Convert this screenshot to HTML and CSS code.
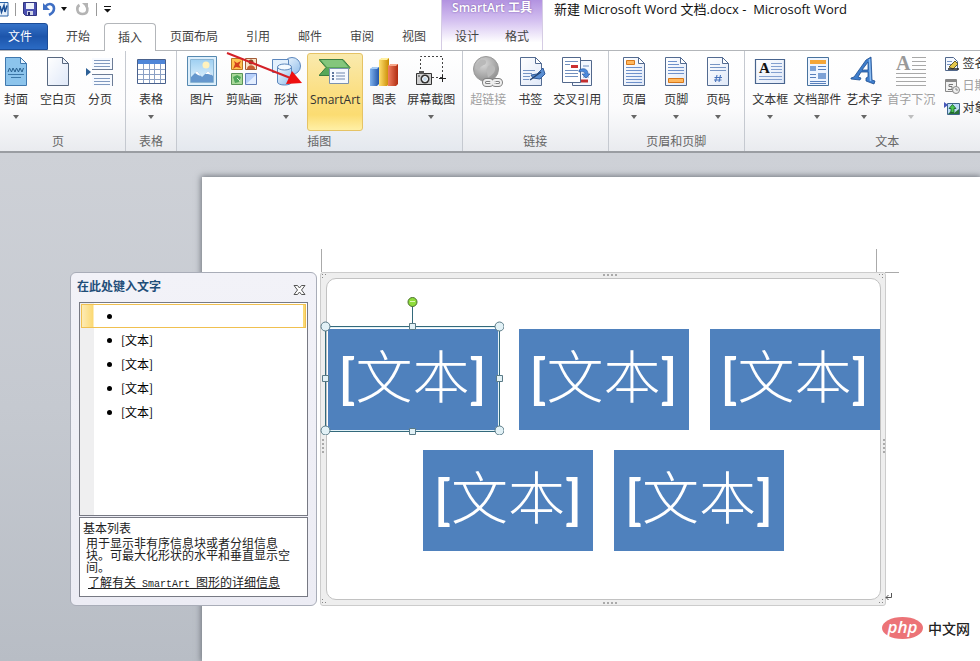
FILE: index.html
```html
<!DOCTYPE html>
<html lang="zh-CN">
<head>
<meta charset="utf-8">
<title>新建 Microsoft Word 文档.docx - Microsoft Word</title>
<link rel="stylesheet" href="styles.css">
</head>
<body>
<svg class="defs" width="0" height="0" aria-hidden="true">
  <defs>
    <linearGradient id="paper" x1="0" y1="0" x2="1" y2="1"><stop offset="0" stop-color="#fff"/><stop offset="1" stop-color="#dfe8f8"/></linearGradient>
    <linearGradient id="sky" x1="0" y1="0" x2="0" y2="1"><stop offset="0" stop-color="#9fd0f2"/><stop offset="1" stop-color="#e6f5fd"/></linearGradient>
    <linearGradient id="blue" x1="0" y1="0" x2="1" y2="0"><stop offset="0" stop-color="#7fb2ee"/><stop offset="1" stop-color="#2456a8"/></linearGradient>
    <linearGradient id="gold" x1="0" y1="0" x2="1" y2="0"><stop offset="0" stop-color="#ffe070"/><stop offset="1" stop-color="#c98a00"/></linearGradient>
    <linearGradient id="red" x1="0" y1="0" x2="1" y2="0"><stop offset="0" stop-color="#f08060"/><stop offset="1" stop-color="#b02c10"/></linearGradient>
    <linearGradient id="glass" x1="0" y1="0" x2="1" y2="1"><stop offset="0" stop-color="#f2f9ff"/><stop offset="1" stop-color="#8fbcea"/></linearGradient>
    <radialGradient id="globe" cx=".4" cy=".3" r=".8"><stop offset="0" stop-color="#d8d8d8"/><stop offset="1" stop-color="#888"/></radialGradient>
  </defs>
</svg>

<header class="titlebar">
  <div class="main-col">
    <div class="quick">
      <svg width="9" height="16" viewBox="0 0 9 16"><path d="M0 1.500H8V15H0" fill="#e6f0fb" stroke="#2a62a8"/><path d="M0 5l1.500 6L4 4.500 5 11 7 4.500" fill="none" stroke="#1b4f96" stroke-width="1.600"/></svg>
      <span class="bar"></span>
      <button class="qbtn" aria-label="保存"><svg width="16" height="16" viewBox="0 0 16 16"><path d="M1.500 1.500h13v13h-11l-2-2z" fill="#4a50b0" stroke="#303480"/><path d="M4 2h8v6H4z" fill="#eef2fb"/><path d="M5 10h6v4H5z" fill="#cfd4e6"/><path d="M6 11h2v3H6z" fill="#23286c"/></svg></button>
      <button class="qbtn" aria-label="撤消"><svg width="15" height="16" viewBox="0 0 15 16"><path d="M3 6C7 1 12 3 12 7.500c0 3-2 5-5 6.500" fill="none" stroke="#3f6fc4" stroke-width="2.600"/><path d="M1 2v7h7z" fill="#3f6fc4"/></svg></button>
      <span class="caret dark"></span>
      <button class="qbtn redo" aria-label="恢复"><svg width="15" height="16" viewBox="0 0 15 16"><path d="M4.500 4C1 6 1.500 13 7.500 13S13 7 11 4.500" fill="none" stroke="#b4b4b4" stroke-width="2.600"/><path d="M7 2h6v6z" fill="#b4b4b4"/></svg></button>
      <span class="bar"></span>
      <button class="qbtn" aria-label="自定义快速访问工具栏"><svg width="9" height="8" viewBox="0 0 9 8"><path d="M1 1h7v1H1zM1 4h7L4.500 7.500z" fill="#111"/></svg></button>
    </div>
    <nav class="tabs">
      <button class="tab file">文件</button>
      <button class="tab">开始</button>
      <button class="tab active">插入</button>
      <button class="tab">页面布局</button>
      <button class="tab">引用</button>
      <button class="tab">邮件</button>
      <button class="tab">审阅</button>
      <button class="tab">视图</button>
    </nav>
  </div>
  <div class="context">
    <div class="context-title">SmartArt 工具</div>
    <div class="tabs"><button class="tab">设计</button><button class="tab">格式</button></div>
  </div>
  <h1 class="title">新建 Microsoft Word 文档.docx&nbsp;-&nbsp; Microsoft Word</h1>
</header>

<section class="ribbon">
  <div class="group">
    <div class="tools">
      <button class="tool"><svg viewBox="0 0 32 32"><path d="M5.500 1.500h15l6 6v22h-21z" fill="#8cc4ec" stroke="#3f78ae"/><path d="M20.500 1.500v6h6z" fill="#e8f5ff" stroke="#3f78ae"/><path d="M8 16l1.500-4 2 4 1.500-4 2 4 1.500-4 2 4 1.500-4 2 4 1.500-4" fill="none" stroke="#28608f"/><path d="M8 18.500h16M11 21.500h10" stroke="#3d78a8"/></svg><span>封面</span><i class="caret"></i></button>
      <button class="tool"><svg viewBox="0 0 32 32"><path d="M5.500 1.500h15l6 6v22h-21z" fill="url(#paper)" stroke="#586880"/><path d="M20.500 1.500v6h6z" fill="#eef3fb" stroke="#586880"/></svg><span>空白页</span></button>
      <button class="tool"><svg viewBox="0 0 32 32"><path d="M8 2v12h20.500V2M8 30V19h20.500v11" fill="#f7faff"/><path d="M28.500 2v12M28.500 19v11M8 13.500h21M8 18.500h21" stroke="#6c7c96"/><path d="M10 4.500h16M10 7.500h16M10 10.500h16M10 22.500h16M10 25.500h16M10 28.500h16" stroke="#8099bf"/><path d="M2 12l5 4-5 4z" fill="#2d6096"/></svg><span>分页</span></button>
    </div>
    <div class="caption">页</div>
  </div>
  <div class="group">
    <div class="tools">
      <button class="tool"><svg viewBox="0 0 32 32"><path d="M2.500 3.500h28v24h-28z" fill="#fff" stroke="#48608c"/><path d="M3 4h27v4H3z" fill="#4f86d8"/><path d="M3 13.500h27M3 18.500h27M3 23.500h27M8.500 8v19M14.500 8v19M19.500 8v19M25.500 8v19" stroke="#8ba0c4"/></svg><span>表格</span><i class="caret"></i></button>
    </div>
    <div class="caption">表格</div>
  </div>
  <div class="group shaded">
    <div class="tools">
      <button class="tool"><svg viewBox="0 0 32 32"><path d="M1.500 .5h29v29h-29z" fill="#dceefb" stroke="#5689b0"/><path d="M4.500 3.500h23v23h-23z" fill="url(#sky)" stroke="#8cb6d4"/><circle cx="20" cy="9" r="3.500" fill="#fff2bd"/><path d="M5 21l6-6 5 6 6-6 5 5v6H5z" fill="#6597cd"/><path d="M9 17l2-2 4 5-3-1zM19 18l3-3 4 4-4-1z" fill="#fff"/></svg><span>图片</span></button>
      <button class="tool"><svg viewBox="0 0 32 32"><path d="M3.500 2.500h11v11h-11z" fill="#ffc352" stroke="#b97823"/><path d="M6 5l3 2 4-2-2 4 2 3-5-1-3 2 2-5z" fill="#d4401c"/><path d="M17.500 2.500h11v11h-11z" fill="#f8e3c7" stroke="#a35c37"/><circle cx="23" cy="6" r="2.500" fill="#8d4425"/><path d="M19 13c0-5 8-5 8 0" fill="#ca5e32"/><path d="M3.500 17.500h11v11h-11z" fill="#a9d99a" stroke="#599457"/><path d="M5 21l4-2 4 2-2 5-4 1z" fill="#4fa55a"/><path d="M9 22l3 3" stroke="#d9f0d4"/><path d="M17.500 17.500h11v11h-11z" fill="#b7d0fa" stroke="#617db6"/><path d="M18 28l10-9v9z" fill="#e3eeff"/></svg><span>剪贴画</span></button>
      <button class="tool"><svg viewBox="0 0 32 32"><circle cx="22" cy="10" r="8.500" fill="url(#glass)" stroke="#5c87bd"/><path d="M2.500 3.500h16v13h-16z" fill="#e3f0fd" stroke="#5c87bd"/><path d="M7.500 11v15c0 4 14 4 14 0V11" fill="url(#glass)" stroke="#5c87bd"/><ellipse cx="14.500" cy="11" rx="7" ry="3" fill="#f5faff" stroke="#5c87bd"/></svg><span>形状</span><i class="caret"></i></button>
      <button class="tool lit"><svg viewBox="0 0 32 32"><path d="M0 3.500h24l7 8-7 8H0l7-8z" fill="#58a758" stroke="#3b7d42"/><path d="M2 4h21l6 7H8z" fill="#84c67c"/><path d="M10.500 12.500h19v15h-19z" fill="#f6faff" stroke="#7c92ae"/><path d="M13 17h2M13 20h2M13 23h2" stroke="#2c4c80" stroke-width="1.500"/><path d="M17 17h9M17 20h9M17 23h9" stroke="#6f87ad"/></svg><span>SmartArt</span></button>
      <button class="tool"><svg viewBox="0 0 32 32"><path d="M2 13l3-2h6v17l-2 2H2z" fill="url(#blue)"/><path d="M2 13l3-2h6l-2 2z" fill="#a5ccf6"/><path d="M11 4l3-2h7v26l-2 2h-8z" fill="url(#gold)"/><path d="M11 4l3-2h7l-2 2z" fill="#fff0a0"/><path d="M20 10l3-2h7v20l-2 2h-8z" fill="url(#red)"/><path d="M20 10l3-2h7l-2 2z" fill="#f7a789"/></svg><span>图表</span></button>
      <button class="tool"><svg viewBox="0 0 32 32"><path d="M5.500 17V.500h22v21H17" fill="none" stroke="#444" stroke-dasharray="2 2"/><path d="M24 22.500h7M27.500 19v7" stroke="#222"/><path d="M1.500 17.500h15v11h-15z" fill="#cfcfcf" stroke="#333"/><path d="M4 15h5v3H4z" fill="#555"/><circle cx="10" cy="23" r="4.500" fill="#333"/><circle cx="10" cy="23" r="2.500" fill="#c8dcec" stroke="#fff"/><path d="M3 20h2" stroke="#333"/></svg><span>屏幕截图</span><i class="caret"></i></button>
    </div>
    <div class="caption">插图</div>
  </div>
  <div class="group">
    <div class="tools">
      <button class="tool" disabled><svg viewBox="0 0 32 32"><circle cx="14" cy="13" r="12.500" fill="url(#globe)" stroke="#999"/><path d="M7 5c4-3 8-1 7 2s-5 2-6 5-5 1-5-1zM16 10c4-2 8 0 7 4s-4 5-6 7-1-5-3-6z" fill="#b9b9b9"/><g fill="none" stroke="#808080" stroke-width="4"><rect x="12" y="24" width="8" height="5" rx="2.500"/><rect x="21" y="24" width="8" height="5" rx="2.500"/></g><g fill="none" stroke="#eee" stroke-width="2"><rect x="12" y="24" width="8" height="5" rx="2.500"/><rect x="21" y="24" width="8" height="5" rx="2.500"/><path d="M18 26.500h6"/></g></svg><span>超链接</span></button>
      <button class="tool"><svg viewBox="0 0 32 32"><path d="M6.500 1.500h15l6 6v22h-21z" fill="url(#paper)" stroke="#536b91"/><path d="M21.500 1.500v6h6z" fill="#fff" stroke="#536b91"/><path d="M9 14.500h12M9 17.500h9M9 20.500h7M9 23.500h6" stroke="#7795c4"/><path d="M29 12l2 6-5 5-7-1-2-3 6-1z" fill="#5a8ed2" stroke="#315b9b"/><path d="M16 24l11-8" stroke="#26446f" stroke-width="1.500"/></svg><span>书签</span></button>
      <button class="tool"><svg viewBox="0 0 32 32"><path d="M11.500 4.500h19v25h-19z" fill="#f4f8ff" stroke="#52688c"/><path d="M14 25h13" stroke="#c32e2e" stroke-width="3"/><path d="M22 10h6M22 21h6" stroke="#7190bf"/><path d="M1.500 1.500h18v25h-18z" fill="#fff" stroke="#52688c"/><path d="M4 5.500h13M4 8.500h5M4 14.500h13M4 17.500h13M4 20.500h13" stroke="#7190bf"/><path d="M10 9h7v3h-7z" fill="#cc3030"/><path d="M18 14c6-3 9 0 9 4h2l-4 4-4-4h3c0-2-2-3-6-2z" fill="#4b8add" stroke="#2b5da5" stroke-width=".7"/></svg><span>交叉引用</span></button>
    </div>
    <div class="caption">链接</div>
  </div>
  <div class="group">
    <div class="tools">
      <button class="tool"><svg viewBox="0 0 32 32"><path d="M5.500 1.500h15l6 6v22h-21z" fill="url(#paper)" stroke="#536b91"/><path d="M20.500 1.500v6h6z" fill="#fff" stroke="#536b91"/><path d="M8.500 4.500h8v4h-8z" fill="#ffb75d" stroke="#d7781b"/><path d="M8 11.500h16M8 14.500h16M8 17.500h16M8 20.500h16M8 23.500h16M8 26.500h16" stroke="#6e91cb"/></svg><span>页眉</span><i class="caret"></i></button>
      <button class="tool"><svg viewBox="0 0 32 32"><path d="M5.500 1.500h15l6 6v22h-21z" fill="url(#paper)" stroke="#536b91"/><path d="M20.500 1.500v6h6z" fill="#fff" stroke="#536b91"/><path d="M8 5.500h9M8 8.500h11M8 11.500h16M8 14.500h16M8 17.500h16" stroke="#6e91cb"/><path d="M8.500 22.500h15v4h-15z" fill="#ffb75d" stroke="#d7781b"/></svg><span>页脚</span><i class="caret"></i></button>
      <button class="tool"><svg viewBox="0 0 32 32"><path d="M5.500 1.500h15l6 6v22h-21z" fill="url(#paper)" stroke="#536b91"/><path d="M20.500 1.500v6h6z" fill="#fff" stroke="#536b91"/><path d="M8 8.500h10M8 11.500h16M8 14.500h16" stroke="#7795c4"/><path d="M15 19l-1.500 7M18.500 19l-1.500 7M12.500 21.500h7.500M12 24h7.500" stroke="#4772bb" stroke-width="1.100"/></svg><span>页码</span><i class="caret"></i></button>
    </div>
    <div class="caption">页眉和页脚</div>
  </div>
  <div class="group wide">
    <div class="tools">
      <button class="tool"><svg viewBox="0 0 32 32"><path d="M1.500 3.500h29v24h-29z" fill="url(#paper)" stroke="#48648e" stroke-width="1.200"/><text x="5" y="17" class="glyph small">A</text><path d="M17 7.500h11M17 10.500h11M17 13.500h11M17 16.500h11M5 20.500h23M5 23.500h23" stroke="#84a0cf"/></svg><span>文本框</span><i class="caret"></i></button>
      <button class="tool"><svg viewBox="0 0 32 32"><path d="M6.500 1.500h21v28h-21z" fill="#eef5ff" stroke="#48739f"/><path d="M9 4h16v4H9z" fill="#f5a637"/><path d="M9 10h6v5H9zM17 17h8v6h-8z" fill="#7da2d6"/><path d="M17 10.500h8M17 13.500h8M9 18.500h6M9 21.500h6M9 25.500h16M9 27.500h16" stroke="#5880bc"/></svg><span>文档部件</span><i class="caret"></i></button>
      <button class="tool"><svg viewBox="0 0 32 32"><path d="M3 22l3-1L18 4l5-3 1 23 3 1-1 3-8-3v-3l2-1v-5h-7l-3 5 3 1-1 2-9-1zM14 14h6V6z" fill="#3e7dcc" stroke="#1e4e91" stroke-width=".8"/><path d="M21.500 3l1 22" stroke="#91c0f1" stroke-width="1.500"/></svg><span>艺术字</span><i class="caret"></i></button>
      <button class="tool" disabled><svg viewBox="0 0 32 32"><text x="1" y="14" class="glyph pale">A</text><path d="M17 1.500h14M17 5.500h14M17 9.500h14M17 13.500h14M1 17.500h30M1 21.500h30M1 25.500h30M1 29.500h30" stroke="#a8a8a8"/></svg><span>首字下沉</span><i class="caret"></i></button>
      <div class="stack">
        <button class="mini"><svg viewBox="0 0 16 16"><path d="M1.500 1.500h8l4 4v9h-12z" fill="#f4f8ff" stroke="#52688c"/><path d="M3 5.500h5M3 8.500h4" stroke="#7795c4"/><path d="M5 11l6-6 3 3-5 5z" fill="#e5c84c" stroke="#655b29"/><path d="M4 13h11" stroke="#222" stroke-width="1.500"/></svg>签名行</button>
        <button class="mini" disabled><svg viewBox="0 0 16 16"><path d="M1.500 1.500h11v12h-11z" fill="#f1f1f1" stroke="#888"/><path d="M2 3h10" stroke="#888" stroke-width="2"/><path d="M9 6.500H5v2h3v3H4" fill="none" stroke="#777"/><circle cx="12" cy="12" r="3.500" fill="#eee" stroke="#888"/><path d="M12 10v2h2" fill="none" stroke="#888"/></svg>日期和时间</button>
        <button class="mini"><svg viewBox="0 0 16 16"><path d="M3.500 3.500h12v11h-12z" fill="#bcdcf7" stroke="#40658c"/><path d="M4 14l3-3 3 2 5-4v5z" fill="#2a743a"/><path d="M0 2l4 3-4 3z" fill="#4758ba"/><path d="M8.500 4.500l3.500 4h-2v4H7v-4H5z" fill="#4dc653" stroke="#155d22" stroke-width=".8"/></svg>对象</button>
      </div>
    </div>
    <div class="caption">文本</div>
  </div>
  <svg class="pointer" width="80" height="36" viewBox="0 0 80 36" aria-hidden="true"><path d="M2 2L68 28" stroke="#d42027" stroke-width="2"/><path d="M77 32l-16 1 6-13z" fill="#ee1010"/></svg>
</section>

<main class="desk">
  <article class="page">
    <div class="frame">
      <i class="crop left"></i><i class="crop right"></i><i class="crop side"></i>
      <i class="grip top"></i><i class="grip bottom"></i><i class="grip west"></i><i class="grip east"></i>
      <svg class="corner nw" viewBox="0 0 7 7"><path d="M1 1h1v1H1zM4 1h1v1H4zM1 4h1v1H1z"/></svg>
      <svg class="corner ne" viewBox="0 0 7 7"><path d="M1 1h1v1H1zM4 1h1v1H4zM4 4h1v1H4z"/></svg>
      <svg class="corner sw" viewBox="0 0 7 7"><path d="M1 1h1v1H1zM4 4h1v1H4zM1 4h1v1H1z"/></svg>
      <svg class="corner se" viewBox="0 0 7 7"><path d="M4 1h1v1H4zM4 4h1v1H4zM1 4h1v1H1z"/></svg>
      <div class="tiles">
        <div class="tile selected"><b>[</b>文本<b>]</b>
          <svg class="handles" width="184" height="140" viewBox="0 0 184 140" aria-hidden="true">
            <path d="M5.500 31.500h174v105H5.500zM92.500 11v20" fill="none" stroke="#33697b"/>
            <path d="M7 32.500h171M7 135.500h171M178.500 33v102" stroke="#e4f3f8"/>
            <circle cx="92.500" cy="7" r="4.500" fill="#8fdc3c" stroke="#49702b"/><path d="M90 6.500h5" stroke="#d8f7b2"/>
            <g fill="#e2f1f6" stroke="#5a7a86"><circle cx="5.500" cy="31.500" r="4.500"/><circle cx="179.500" cy="31.500" r="4.500"/><circle cx="5.500" cy="135.500" r="4.500"/><circle cx="179.500" cy="135.500" r="4.500"/><path d="M89.500 28.500h6v6h-6zM89.500 133.500h6v6h-6zM2.500 80.500h6v6h-6zM176.500 80.500h6v6h-6z"/></g>
          </svg>
        </div>
        <div class="tile"><b>[</b>文本<b>]</b></div>
        <div class="tile"><b>[</b>文本<b>]</b></div>
        <div class="tile"><b>[</b>文本<b>]</b></div>
        <div class="tile"><b>[</b>文本<b>]</b></div>
      </div>
      <svg class="mark" width="8" height="8" viewBox="0 0 8 8" aria-hidden="true"><path d="M6.500 0v4.500H1M3.500 2L1 4.500 3.500 7" fill="none" stroke="#555"/></svg>
    </div>

    <aside class="pane">
      <div class="pane-head">
        <h2>在此处键入文字</h2>
        <button class="close" aria-label="关闭"><svg width="13" height="12" viewBox="0 0 13 12"><path d="M1 1.500h3.500l2 2.500 2-2.500H12L8.500 6l3.500 4.500H8.500L6.500 8l-2 2.500H1L4.500 6z" fill="#fff" stroke="#555"/></svg></button>
      </div>
      <ul class="items">
        <li class="current"></li>
        <li>[文本]</li>
        <li>[文本]</li>
        <li>[文本]</li>
        <li>[文本]</li>
      </ul>
      <div class="about">
        <h3>基本列表</h3>
        <p>用于显示非有序信息块或者分组信息块。可最大化形状的水平和垂直显示空间。</p>
        <a href="#">了解有关<span class="latin"> SmartArt </span>图形的详细信息</a>
      </div>
    </aside>
  </article>
  <div class="brand"><span class="php">php</span><span>中文网</span></div>
</main>
</body>
</html>
```
FILE: styles.css
```css
* { box-sizing: border-box; }

body {
  margin: 0;
  height: 100vh;
  overflow: hidden;
  display: flex;
  flex-direction: column;
  background: #fff;
  color: #333;
  font: 12px/16px "Open Sans", "Noto Sans CJK SC", sans-serif;
}

button {
  font: inherit;
  color: inherit;
  background: none;
  border: 0;
  padding: 0;
  margin: 0;
}

h1, h2, h3, p, ul { margin: 0; padding: 0; }
.defs { position: absolute; }

/* Title bar and tabs */
.titlebar { display: flex; height: 51px; border-bottom: 1px solid #b3b6ba; }
.main-col { display: flex; flex-direction: column; width: 441px; flex: none; }
.quick { display: flex; align-items: center; height: 18px; gap: 4px; }
.quick svg { display: block; }
.quick .bar { width: 1px; height: 13px; margin: 0 2px; background: #999; }
.qbtn { flex: none; }
.quick .caret { margin: 0; }
.qbtn.redo { margin-left: 4px; }

.tabs { display: flex; height: 28px; margin-top: auto; margin-bottom: -1px; }
.tab { padding: 0 14px; white-space: nowrap; color: #444; }
.tab.file {
  margin: 0 4px 1px -8px;
  padding: 0 15px;
  color: #fff;
  background: linear-gradient(#3572c8, #1d55ab 50%, #2b6bc4);
  border: 1px solid #1b4c98;
  border-radius: 0 3px 0 0;
}
.tab.active {
  padding: 0 13px;
  background: #fff;
  border: 1px solid #b3b6ba;
  border-bottom: 0;
  border-radius: 4px 4px 0 0;
}

.context {
  display: flex;
  flex-direction: column;
  flex: none;
  background: linear-gradient(#b292e0, #d3bff0 40%, #fff 85%);
  border: solid #d5cce4;
  border-width: 0 1px;
}
.context-title { color: #fff; font-weight: 600; text-align: center; text-shadow: 0 0 2px #7455a5; }
.context .tab { padding: 0 13px; }
.title { margin-left: 11px; font-size: 13px; font-weight: 400; line-height: 18px; color: #111; white-space: nowrap; }

/* Ribbon */
.ribbon {
  position: relative;
  display: flex;
  flex: none;
  height: 102px;
  overflow: hidden;
  background: linear-gradient(#fff, #fcfcfd 55%, #e9ebef);
  border-bottom: 2px solid #9a9da2;
}
.group { display: flex; flex-direction: column; flex: none; padding: 2px 4px 0; border-right: 1px solid #c5c9d0; }
.group:first-child { margin-left: -5px; padding-left: 0; }
.group:nth-child(n+3) { padding-right: 5px; }
.group.shaded { background: linear-gradient(#fff, #f7f8fa 50%, #e4e8ee); }
.group.wide { min-width: 286px; }
.tools { display: flex; height: 78px; }
.caption { margin-top: 3px; text-align: center; color: #666; }

.tool {
  display: flex;
  flex-direction: column;
  align-items: center;
  min-width: 42px;
  padding: 3px 2px 0;
  white-space: nowrap;
}
.tool svg { width: 32px; height: 32px; margin-bottom: 4px; }
.tool:disabled, .mini:disabled { color: #a0a0a0; }
.tool:disabled .caret { opacity: .4; }
.tool.lit {
  padding: 2px 2px 0;
  border: 1px solid #e5c365;
  border-radius: 3px;
  background: linear-gradient(#f9eaae, #fbdf83 50%, #fbdc72 80%, #fff0a6);
}
.caret { width: 0; height: 0; margin-top: 7px; border: 3px solid transparent; border-top: 4px solid #666; border-bottom: 0; }
.caret.dark { border-top-color: #111; }
.glyph { font: bold 15px "Liberation Serif", serif; fill: #111; }
.glyph.pale { font-size: 20px; fill: #999; }

.stack { display: flex; flex-direction: column; margin-left: 7px; }
.mini { display: flex; align-items: center; height: 22px; gap: 2px; white-space: nowrap; }
.mini svg { width: 16px; height: 16px; }
.pointer { position: absolute; left: 225px; top: 0; }

/* Document */
.desk {
  position: relative;
  flex: 1;
  display: flex;
  padding: 24px 0 0 202px;
  background: linear-gradient(#ced1d7, #c5c9d0 50%, #b8bdc5);
}
.page { position: relative; flex: 1; padding: 95px 0 0 118px; background: #fff; box-shadow: 0 0 6px 1px #70757d; }

.frame {
  position: relative;
  width: 566px;
  padding: 5px;
  background: #eee;
  border: 1px solid #ccc;
  border-radius: 3px;
}
.tiles {
  display: flex;
  flex-wrap: wrap;
  justify-content: center;
  align-content: flex-start;
  gap: 20px 21px;
  min-height: 322px;
  margin-right: -1px;
  padding-top: 50px;
  background: #fff;
  border: 1px solid #c2c2c2;
  border-radius: 10px;
}
.tile {
  position: relative;
  width: 170px;
  height: 101px;
  text-align: center;
  background: #4f81bd;
  color: #fff;
  font: 300 57px/94px Lato, "Noto Sans CJK SC", sans-serif;
}
.tile b { font-size: 54px; font-weight: 700; }
.handles { position: absolute; left: -8px; top: -34px; }
.crop { position: absolute; background: #aaa; }
.crop.left, .crop.right { width: 1px; height: 23px; top: -24px; }
.crop.left { left: 0; }
.crop.right { right: 8px; }
.crop.side { width: 14px; height: 1px; top: -1px; right: -14px; }
.grip { position: absolute; }
.grip.top, .grip.bottom { left: 50%; width: 14px; border-top: 2px dotted #aaa; }
.grip.top { top: 1px; }
.grip.bottom { bottom: 1px; }
.grip.west, .grip.east { top: 50%; height: 14px; border-left: 2px dotted #aaa; }
.grip.west { left: 1px; }
.grip.east { right: 0; }
.corner { position: absolute; width: 7px; height: 7px; fill: #888; }
.nw { left: 0; top: 0; }
.ne { right: 0; top: 0; }
.sw { left: 0; bottom: 0; }
.se { right: 0; bottom: 0; }
.mark { position: absolute; right: -8px; bottom: 4px; }

/* Text pane floating beside the graphic */
.pane {
  position: absolute;
  left: -132px;
  top: 95px;
  width: 247px;
  padding: 0 8px 8px;
  background: linear-gradient(#f2f2f8, #ececf4);
  border: 1px solid #a9adb8;
  border-radius: 6px;
  color: #222;
  font-family: "Noto Sans CJK SC", sans-serif;
}
.pane-head { display: flex; justify-content: space-between; height: 29px; }
.pane-head h2 { margin: 5px 0 0 -2px; font-size: 12px; line-height: 16px; color: #1f4e79; }
.close { margin: 11px 2px 0 0; height: 12px; }
.close svg { display: block; }
.items {
  min-height: 214px;
  padding: 1px;
  list-style: none;
  background: linear-gradient(90deg, #efeff0 14px, #fff 14px);
  border: 1px solid #777983;
}
.items li { display: flex; align-items: center; height: 24px; padding-left: 26px; color: #000; }
.items li::before { content: ""; width: 5px; height: 5px; margin-right: 9px; border-radius: 50%; background: #000; }
.items .current {
  padding-left: 25px;
  border: 1px solid #f0c050;
  background: linear-gradient(90deg, #fdebb5, #fbd973 11px, #fff 12px, #fff calc(100% - 2px), #fbd973 0);
}
.about { min-height: 80px; margin-top: 1px; padding: 2px 3px; background: #fff; border: 1px solid #777983; }
.about h3 { font-size: 12px; font-weight: 400; line-height: 15px; }
.about p { margin: 2px 0 0 3px; width: 212px; line-height: 12px; }
.about a { display: block; margin: 1px 0 0 5px; color: #222; }
.latin { font-family: "Liberation Mono", monospace; font-size: 10px; }

.brand { position: absolute; right: 10px; bottom: 22px; display: flex; align-items: center; gap: 5px; font: 500 14px/22px "Noto Sans CJK SC", sans-serif; color: #222; }
.php { width: 41px; height: 22px; border-radius: 50%; background: #ec7377; color: #fff; text-align: center; font: italic 600 17px/19px "Open Sans", sans-serif; }
```
